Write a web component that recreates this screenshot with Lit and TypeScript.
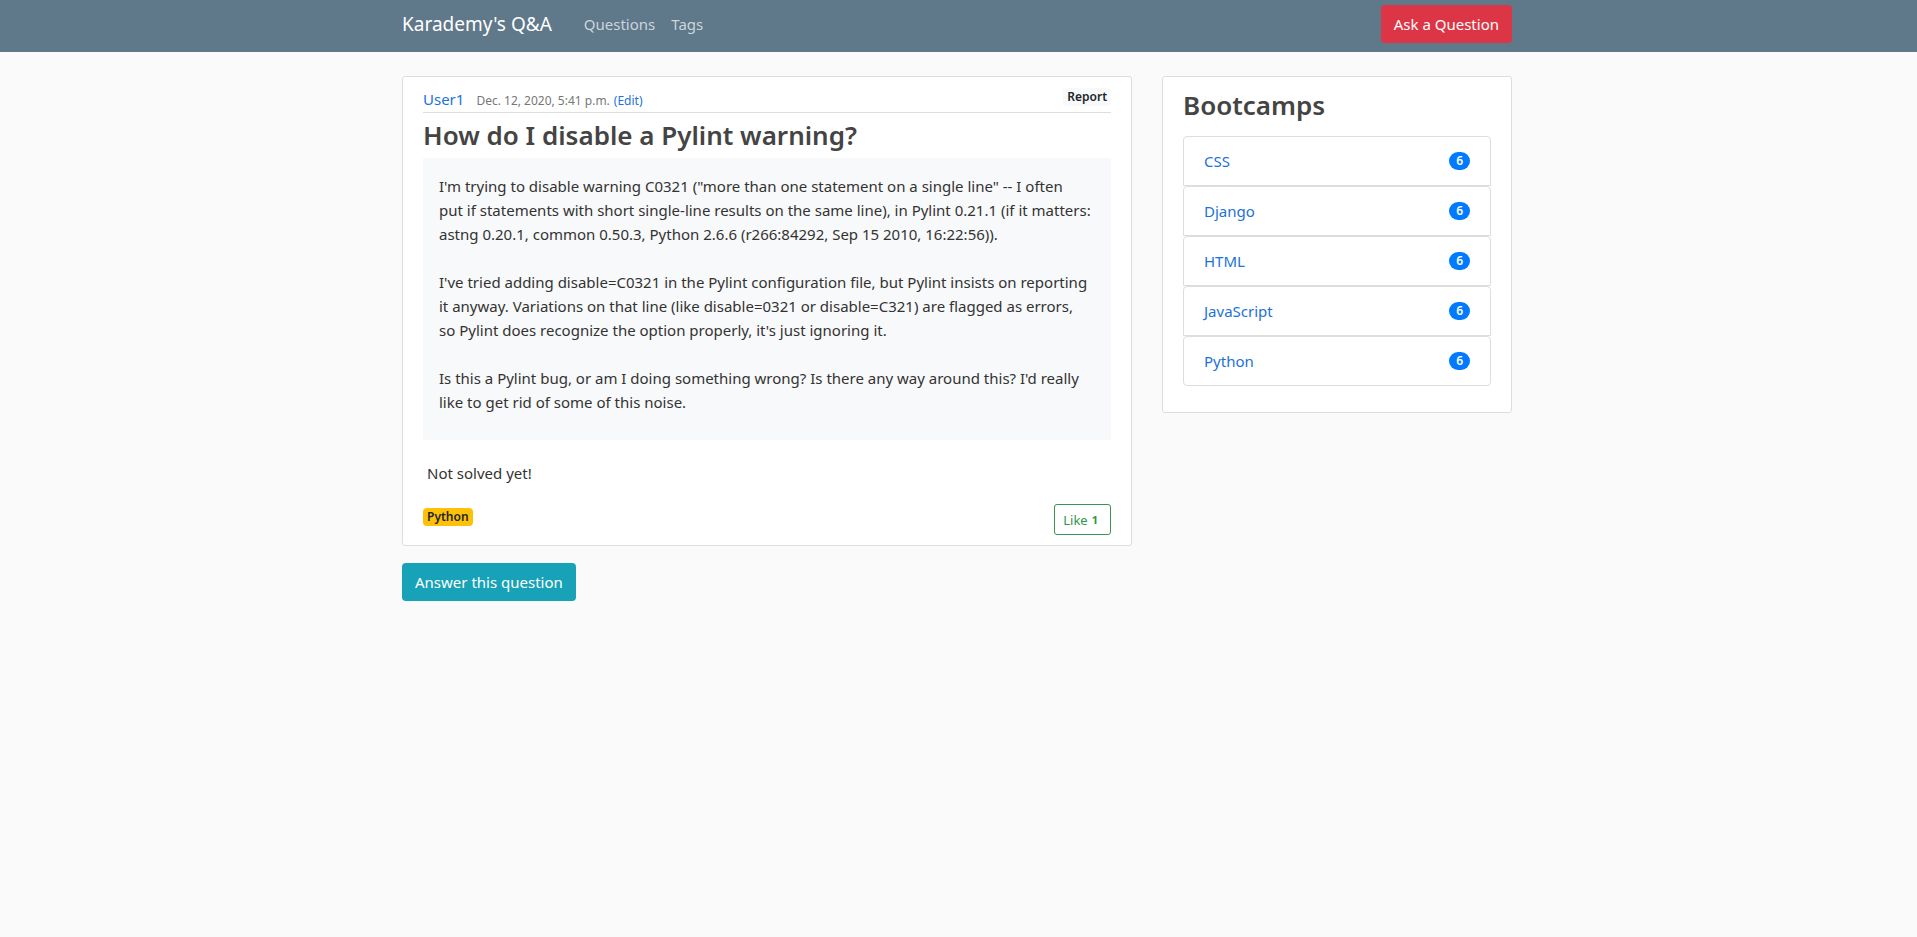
import { LitElement, html, css } from "lit";
import { customElement, state } from "lit/decorators.js";

interface Bootcamp {
  name: string;
  count: number;
}

const bootcamps: Bootcamp[] = ["CSS", "Django", "HTML", "JavaScript", "Python"].map(
  (name) => ({ name, count: 6 })
);

const questionText = `I'm trying to disable warning C0321 ("more than one statement on a single line" -- I often
put if statements with short single-line results on the same line), in Pylint 0.21.1 (if it matters:
astng 0.20.1, common 0.50.3, Python 2.6.6 (r266:84292, Sep 15 2010, 16:22:56)).

I've tried adding disable=C0321 in the Pylint configuration file, but Pylint insists on reporting
it anyway. Variations on that line (like disable=0321 or disable=C321) are flagged as errors,
so Pylint does recognize the option properly, it's just ignoring it.

Is this a Pylint bug, or am I doing something wrong? Is there any way around this? I'd really
like to get rid of some of this noise.`;

@customElement("app-root")
export class AppRoot extends LitElement {
  static styles = css`
    :host {
      display: block;
      min-height: 100vh;
      background: #fafafa;
      color: #333;
      font-family: "Noto Sans", "Segoe UI", sans-serif;
      font-size: 15px;
      line-height: 24px;
    }
    * {
      box-sizing: border-box;
    }
    a {
      color: #1c72d8;
      text-decoration: none;
    }
    h1,
    h2,
    p,
    ul {
      margin: 0;
      padding: 0;
    }
    button {
      font: inherit;
      cursor: pointer;
      border: 1px solid transparent;
    }
    .container {
      max-width: 1113px;
      margin: 0 auto;
      padding-right: 3px;
    }
    .header {
      background: #5f788a;
      padding: 5px 0 9px;
    }
    .nav {
      display: flex;
      align-items: center;
      gap: 16px;
    }
    .brand {
      color: #fff;
      font-size: 19px;
      margin-right: 16px;
    }
    .nav-link {
      color: #cbd5db;
    }
    .btn {
      padding: 6px 12px;
      border-radius: 4px;
      color: #fff;
    }
    .ask {
      margin-left: auto;
      background: #dc3545;
    }
    .answer {
      margin-top: 17px;
      background: #17a2b8;
    }
    .layout {
      display: grid;
      grid-template-columns: minmax(0, 730fr) minmax(0, 350fr);
      gap: 30px;
      align-items: start;
      padding-top: 24px;
    }
    .card {
      background: #fff;
      border: 1px solid #ddd;
      border-radius: 3px;
      padding: 10px 20px;
    }
    .meta {
      display: flex;
      align-items: baseline;
      border-bottom: 1px solid #ddd;
      padding-top: 1px;
      font-size: 12px;
      line-height: 22px;
    }
    .author {
      font-size: 15px;
      margin-right: 12px;
    }
    .date {
      color: #777;
      margin-right: 4px;
    }
    .badge {
      border: 0;
      border-radius: 4px;
      padding: 0 4px;
      font-size: 12px;
      font-weight: 600;
      line-height: 18px;
      color: #212529;
    }
    .report {
      margin-left: auto;
      align-self: flex-start;
      background: #f8f9fa;
    }
    .title {
      color: #444;
      font-size: 26px;
      font-weight: 600;
      line-height: 36px;
    }
    .question .title {
      padding: 4px 0 5px;
    }
    .body {
      background: #f8f9fa;
      padding: 16px 16px 26px;
      white-space: pre-line;
    }
    .status {
      padding: 21px 4px 19px;
    }
    .foot {
      display: flex;
      justify-content: space-between;
      align-items: flex-start;
    }
    .tag {
      background: #ffc107;
      margin-top: 4px;
    }
    .like {
      display: flex;
      align-items: center;
      gap: 4px;
      padding: 4px 12px 3px 8px;
      line-height: 22px;
      border-color: #3a9450;
      border-radius: 3px;
      background: #fff;
      color: #2f9648;
      font-size: 13px;
    }
    .like-count {
      font-size: 11px;
      font-weight: 700;
    }
    .side {
      padding-bottom: 26px;
    }
    .list {
      list-style: none;
      padding-top: 13px;
    }
    .item {
      display: flex;
      justify-content: space-between;
      align-items: center;
      padding: 12px 20px;
      border: 1px solid #ddd;
      border-radius: 4px 4px 0 0;
    }
    .item:last-child {
      border-radius: 4px;
    }
    .count {
      background: #007bff;
      color: #fff;
      border-radius: 10px;
      padding: 0 7px;
    }
  `;

  @state() private likes = 1;

  render() {
    return html`
      <header class="header">
        <nav class="container nav">
          <a class="brand" href="#">Karademy's Q&amp;A</a>
          <a class="nav-link" href="#questions">Questions</a>
          <a class="nav-link" href="#tags">Tags</a>
          <button class="btn ask">Ask a Question</button>
        </nav>
      </header>
      <div class="container layout">
        <main>
          <article class="card question">
            <div class="meta">
              <a class="author" href="#user">User1</a>
              <span class="date">Dec. 12, 2020, 5:41 p.m.</span>
              <a href="#edit">(Edit)</a>
              <button class="badge report">Report</button>
            </div>
            <h1 class="title">How do I disable a Pylint warning?</h1>
            <p class="body">${questionText}</p>
            <p class="status">Not solved yet!</p>
            <div class="foot">
              <a class="badge tag" href="#python">Python</a>
              <button class="like" @click=${() => this.likes++}>
                Like <span class="like-count">${this.likes}</span>
              </button>
            </div>
          </article>
          <button class="btn answer">Answer this question</button>
        </main>
        <aside class="card side">
          <h2 class="title">Bootcamps</h2>
          <ul class="list">
            ${bootcamps.map(
              (b) => html`<li class="item">
                <a href="#${b.name}">${b.name}</a>
                <span class="badge count">${b.count}</span>
              </li>`
            )}
          </ul>
        </aside>
      </div>
    `;
  }
}
